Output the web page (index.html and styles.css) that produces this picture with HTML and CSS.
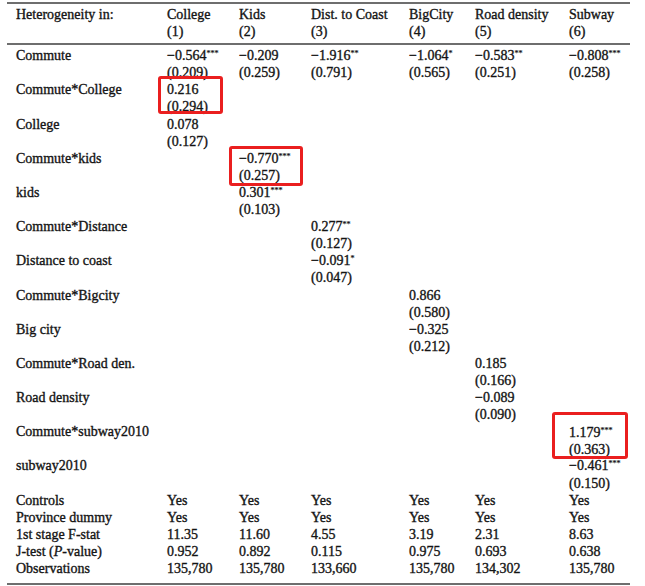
FILE: index.html
```html
<!DOCTYPE html>
<html>
<head>
<meta charset="utf-8">
<link rel="stylesheet" href="styles.css">
</head>
<body>
<table class="reg">
  <colgroup>
    <col class="c-label"><col class="c1"><col class="c2"><col class="c3"><col class="c4"><col class="c5"><col class="c6">
  </colgroup>
  <thead>
    <tr>
      <th class="label">Heterogeneity in:</th>
      <th>College<br>(1)</th>
      <th>Kids<br>(2)</th>
      <th>Dist. to Coast<br>(3)</th>
      <th>BigCity<br>(4)</th>
      <th>Road density<br>(5)</th>
      <th>Subway<br>(6)</th>
    </tr>
  </thead>
  <tbody class="coefs">
    <tr>
      <td class="label">Commute</td>
      <td>−0.564<sup>***</sup><br>(0.209)</td>
      <td>−0.209<br>(0.259)</td>
      <td>−1.916<sup>**</sup><br>(0.791)</td>
      <td>−1.064<sup>*</sup><br>(0.565)</td>
      <td>−0.583<sup>**</sup><br>(0.251)</td>
      <td>−0.808<sup>***</sup><br>(0.258)</td>
    </tr>
    <tr>
      <td class="label">Commute*College</td>
      <td><div class="hl">0.216<br>(0.294)<span class="box box1"></span></div></td>
      <td></td><td></td><td></td><td></td><td></td>
    </tr>
    <tr>
      <td class="label">College</td>
      <td>0.078<br>(0.127)</td>
      <td></td><td></td><td></td><td></td><td></td>
    </tr>
    <tr>
      <td class="label">Commute*kids</td>
      <td></td>
      <td><div class="hl">−0.770<sup>***</sup><br>(0.257)<span class="box box2"></span></div></td>
      <td></td><td></td><td></td><td></td>
    </tr>
    <tr>
      <td class="label">kids</td>
      <td></td>
      <td>0.301<sup>***</sup><br>(0.103)</td>
      <td></td><td></td><td></td><td></td>
    </tr>
    <tr>
      <td class="label">Commute*Distance</td>
      <td></td><td></td>
      <td>0.277<sup>**</sup><br>(0.127)</td>
      <td></td><td></td><td></td>
    </tr>
    <tr>
      <td class="label">Distance to coast</td>
      <td></td><td></td>
      <td>−0.091<sup>*</sup><br>(0.047)</td>
      <td></td><td></td><td></td>
    </tr>
    <tr>
      <td class="label">Commute*Bigcity</td>
      <td></td><td></td><td></td>
      <td>0.866<br>(0.580)</td>
      <td></td><td></td>
    </tr>
    <tr>
      <td class="label">Big city</td>
      <td></td><td></td><td></td>
      <td>−0.325<br>(0.212)</td>
      <td></td><td></td>
    </tr>
    <tr>
      <td class="label">Commute*Road den.</td>
      <td></td><td></td><td></td><td></td>
      <td>0.185<br>(0.166)</td>
      <td></td>
    </tr>
    <tr>
      <td class="label">Road density</td>
      <td></td><td></td><td></td><td></td>
      <td>−0.089<br>(0.090)</td>
      <td></td>
    </tr>
    <tr>
      <td class="label">Commute*subway2010</td>
      <td></td><td></td><td></td><td></td><td></td>
      <td><div class="hl shift">1.179<sup>***</sup><br>(0.363)<span class="box box3"></span></div></td>
    </tr>
    <tr>
      <td class="label">subway2010</td>
      <td></td><td></td><td></td><td></td><td></td>
      <td>−0.461<sup>***</sup><br>(0.150)</td>
    </tr>
  </tbody>
  <tbody class="stats">
    <tr><td class="label">Controls</td><td>Yes</td><td>Yes</td><td>Yes</td><td>Yes</td><td>Yes</td><td>Yes</td></tr>
    <tr><td class="label">Province dummy</td><td>Yes</td><td>Yes</td><td>Yes</td><td>Yes</td><td>Yes</td><td>Yes</td></tr>
    <tr><td class="label">1st stage F-stat</td><td>11.35</td><td>11.60</td><td>4.55</td><td>3.19</td><td>2.31</td><td>8.63</td></tr>
    <tr><td class="label">J-test (<i>P</i>-value)</td><td>0.952</td><td>0.892</td><td>0.115</td><td>0.975</td><td>0.693</td><td>0.638</td></tr>
    <tr class="last"><td class="label">Observations</td><td>135,780</td><td>135,780</td><td>133,660</td><td>135,780</td><td>134,302</td><td>135,780</td></tr>
  </tbody>
</table>
</body>
</html>
```

FILE: styles.css
```css
html, body {
  margin: 0;
  padding: 0;
  background: #ffffff;
}

body {
  font-family: "Liberation Serif", "Times New Roman", serif;
  font-size: 14px;
  color: #141414;
  -webkit-text-stroke: 0.35px #141414;
}

.reg {
  margin: 2px 0 0 7px;
  width: 623px;
  border-collapse: collapse;
  table-layout: fixed;
  border-top: 2px solid #6e6e6e;
  border-bottom: 2px solid #6e6e6e;
}

.c-label { width: 160px; }
.c1 { width: 72px; }
.c2 { width: 72px; }
.c3 { width: 98px; }
.c4 { width: 66px; }
.c5 { width: 94px; }
.c6 { width: 61px; }

.reg th,
.reg td {
  padding: 0;
  text-align: left;
  vertical-align: top;
  font-weight: normal;
  line-height: 17.1px;
  white-space: nowrap;
}

.reg .label {
  padding-left: 9px;
}

.reg thead th {
  padding-top: 2px;
  padding-bottom: 3px;
  border-bottom: 2px solid #6e6e6e;
}

.coefs tr:first-child td {
  padding-top: 2px;
}

.stats tr.last td {
  padding-bottom: 6px;
}

sup {
  font-size: 8px;
  line-height: 0;
  vertical-align: 4px;
  -webkit-text-stroke: 0.2px #141414;
}

.hl {
  position: relative;
}

.hl.shift {
  top: 1px;
}

.box {
  position: absolute;
  border: 3px solid #ea1f1f;
  border-radius: 3px;
  box-sizing: border-box;
}

.box1 {
  left: -9px;
  top: -5px;
  width: 65px;
  height: 38px;
}

.box2 {
  left: -10px;
  top: -4px;
  width: 74px;
  height: 40px;
}

.box3 {
  left: -17px;
  top: -12px;
  width: 76px;
  height: 47px;
}
```
